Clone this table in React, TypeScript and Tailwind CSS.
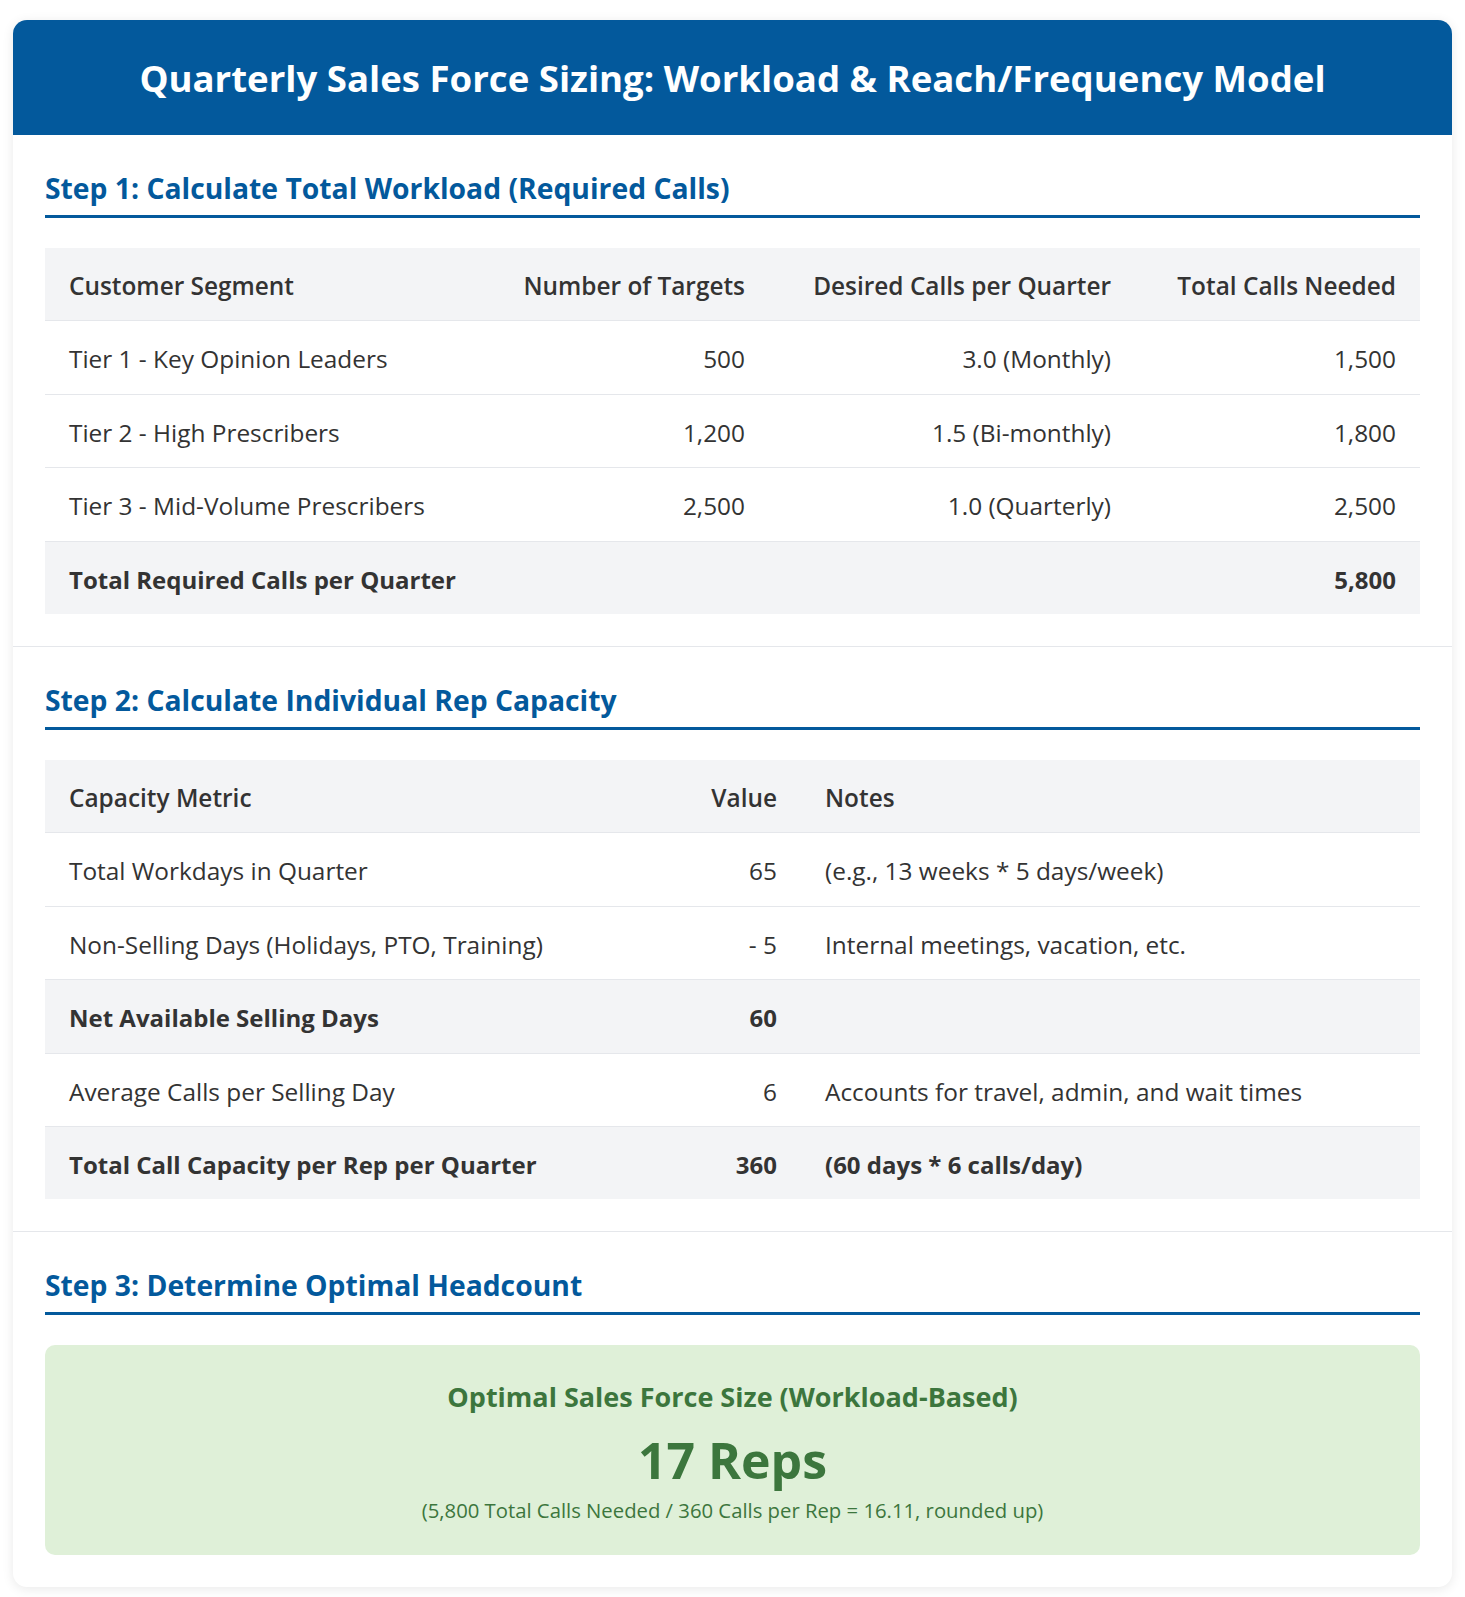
import React from "react";

const workload = [
  ["Tier 1 - Key Opinion Leaders", "500", "3.0 (Monthly)", "1,500"],
  ["Tier 2 - High Prescribers", "1,200", "1.5 (Bi-monthly)", "1,800"],
  ["Tier 3 - Mid-Volume Prescribers", "2,500", "1.0 (Quarterly)", "2,500"],
];

const capacity = [
  { metric: "Total Workdays in Quarter", value: "65", note: "(e.g., 13 weeks * 5 days/week)", total: false },
  { metric: "Non-Selling Days (Holidays, PTO, Training)", value: "- 5", note: "Internal meetings, vacation, etc.", total: false },
  { metric: "Net Available Selling Days", value: "60", note: "", total: true },
  { metric: "Average Calls per Selling Day", value: "6", note: "Accounts for travel, admin, and wait times", total: false },
  { metric: "Total Call Capacity per Rep per Quarter", value: "360", note: "(60 days * 6 calls/day)", total: true },
];

function StepHeading({ children }: { children: React.ReactNode }) {
  return (
    <h2 className="text-[28.3px] leading-[36px] font-bold text-[#03599c] pt-[3px] pb-[9px] border-b-[3px] border-[#03599c] mb-[30px]">
      {children}
    </h2>
  );
}

export default function App() {
  const cell = "px-[24px] pt-[19px] pb-[16.4px] leading-[37px] whitespace-nowrap";

  return (
    <div
      className="min-h-screen bg-white pt-[20px] pb-[9px] px-[13px] text-[#333] text-[24.4px]"
      style={{ fontFamily: "'Open Sans', 'Noto Sans', sans-serif" }}
    >
      <div className="rounded-[14px] bg-white shadow-[0_2px_12px_rgba(0,0,0,0.09)] overflow-hidden">
        {/* HEADER */}
        <div className="bg-[#03599c] pt-[37px] pb-[35px] text-center">
          <h1 className="text-[36.6px] leading-[43px] font-bold text-white">
            Quarterly Sales Force Sizing: Workload &amp; Reach/Frequency Model
          </h1>
        </div>

        {/* STEP 1 */}
        <section className="p-[32px] border-b border-[#e5e7eb]">
          <StepHeading>Step 1: Calculate Total Workload (Required Calls)</StepHeading>
          <table className="w-full table-fixed border-collapse">
            <colgroup>
              <col className="w-[433px]" />
              <col className="w-[291px]" />
              <col className="w-[366px]" />
              <col className="w-[285px]" />
            </colgroup>
            <thead>
              <tr className="bg-[#f3f4f6] border-b border-[#e5e7eb]">
                <th className={`${cell} text-left font-semibold`}>Customer Segment</th>
                <th className={`${cell} text-right font-semibold`}>Number of Targets</th>
                <th className={`${cell} text-right font-semibold`}>Desired Calls per Quarter</th>
                <th className={`${cell} text-right font-semibold`}>Total Calls Needed</th>
              </tr>
            </thead>
            <tbody>
              {workload.map((row) => (
                <tr key={row[0]} className="border-b border-[#e5e7eb]">
                  <td className={`${cell} text-left`}>{row[0]}</td>
                  <td className={`${cell} text-right`}>{row[1]}</td>
                  <td className={`${cell} text-right`}>{row[2]}</td>
                  <td className={`${cell} text-right`}>{row[3]}</td>
                </tr>
              ))}
              <tr className="bg-[#f3f4f6] font-bold text-[24px]">
                <td className={`${cell} text-left`}>Total Required Calls per Quarter</td>
                <td className={cell}></td>
                <td className={cell}></td>
                <td className={`${cell} text-right`}>5,800</td>
              </tr>
            </tbody>
          </table>
        </section>

        {/* STEP 2 */}
        <section className="p-[32px] border-b border-[#e5e7eb]">
          <StepHeading>Step 2: Calculate Individual Rep Capacity</StepHeading>
          <table className="w-full table-fixed border-collapse">
            <colgroup>
              <col className="w-[600px]" />
              <col className="w-[156px]" />
              <col className="w-[619px]" />
            </colgroup>
            <thead>
              <tr className="bg-[#f3f4f6] border-b border-[#e5e7eb]">
                <th className={`${cell} text-left font-semibold`}>Capacity Metric</th>
                <th className={`${cell} text-right font-semibold`}>Value</th>
                <th className={`${cell} text-left font-semibold`}>Notes</th>
              </tr>
            </thead>
            <tbody>
              {capacity.map((r, i) => (
                <tr
                  key={r.metric}
                  className={`${i < capacity.length - 1 ? "border-b border-[#e5e7eb]" : ""} ${
                    r.total ? "bg-[#f3f4f6] font-bold text-[24px]" : ""
                  }`}
                >
                  <td className={`${cell} text-left`}>{r.metric}</td>
                  <td className={`${cell} text-right`}>{r.value}</td>
                  <td className={`${cell} text-left`}>{r.note}</td>
                </tr>
              ))}
            </tbody>
          </table>
        </section>

        {/* STEP 3 */}
        <section className="p-[32px]">
          <StepHeading>Step 3: Determine Optimal Headcount</StepHeading>
          <div className="rounded-[10px] bg-[#dff0d8] text-[#3c763d] text-center h-[210px] pt-[35px]">
            <div className="text-[27px] leading-[34px] font-bold">Optimal Sales Force Size (Workload-Based)</div>
            <div className="text-[50px] leading-[62px] font-bold mt-[15px]">17 Reps</div>
            <div className="text-[20.3px] leading-[28px] mt-[5px]">
              (5,800 Total Calls Needed / 360 Calls per Rep = 16.11, rounded up)
            </div>
          </div>
        </section>
      </div>
    </div>
  );
}
